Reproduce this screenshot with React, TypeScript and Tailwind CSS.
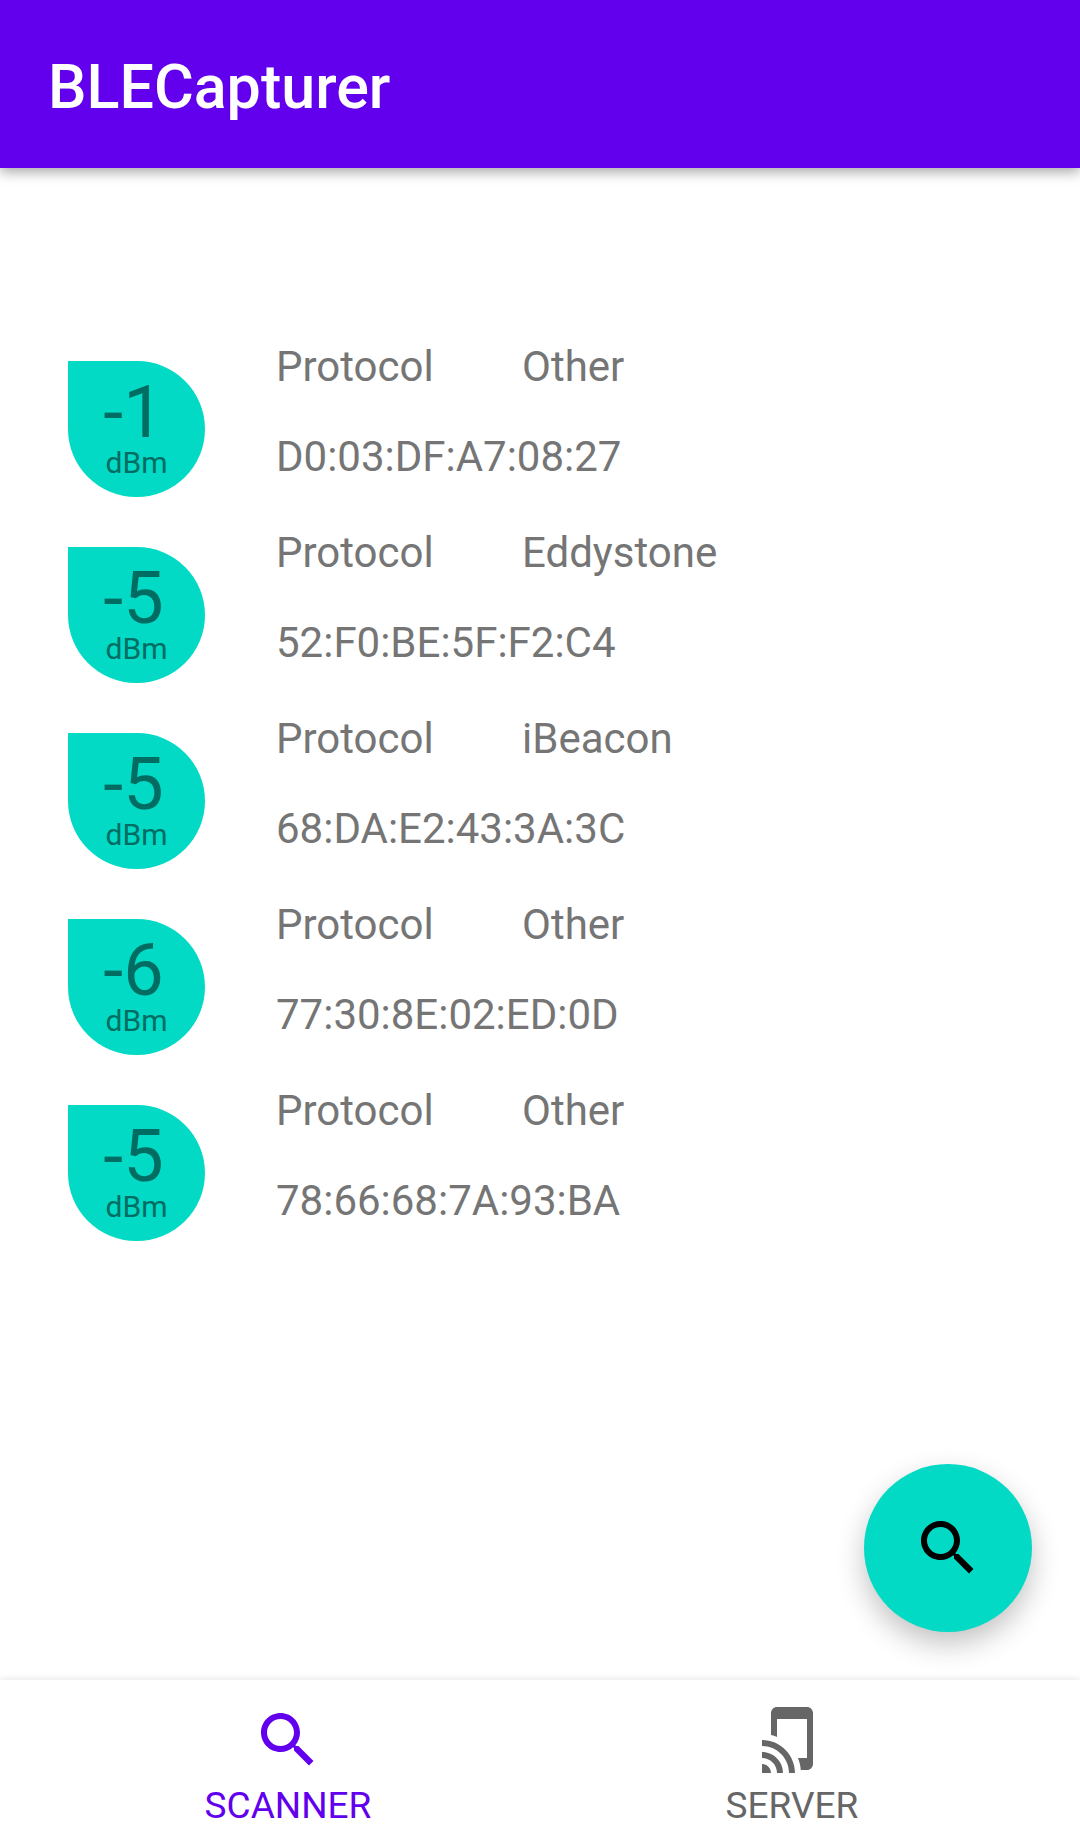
import { useState } from "react";

type Device = { rssi: number; protocol: string; address: string };

const devices: Device[] = [
  { rssi: -1, protocol: "Other", address: "D0:03:DF:A7:08:27" },
  { rssi: -5, protocol: "Eddystone", address: "52:F0:BE:5F:F2:C4" },
  { rssi: -5, protocol: "iBeacon", address: "68:DA:E2:43:3A:3C" },
  { rssi: -6, protocol: "Other", address: "77:30:8E:02:ED:0D" },
  { rssi: -5, protocol: "Other", address: "78:66:68:7A:93:BA" },
];

const searchPath =
  "M15.5 14h-.79l-.28-.27C15.41 12.59 16 11.11 16 9.5 16 5.91 13.09 3 9.5 3S3 5.91 3 9.5 5.91 16 9.5 16c1.61 0 3.09-.59 4.23-1.57l.27.28v.79l5 4.99L20.49 19l-4.99-5zm-6 0C7.01 14 5 11.99 5 9.5S7.01 5 9.5 5 14 7.01 14 9.5 11.99 14 9.5 14z";
const castPath =
  "M2 16v2c2.76 0 5 2.24 5 5h2c0-3.87-3.13-7-7-7zm0 4v3h3c0-1.66-1.34-3-3-3zm0-8v2c4.97 0 9 4.03 9 9h2c0-6.08-4.92-11-11-11zM17 1.01L7 1c-1.1 0-2 .9-2 2v7.37c.69.16 1.36.37 2 .64V5h10v13h-3.03c.52 1.25.84 2.59.95 4H17c1.1 0 2-.9 2-2V3c0-1.1-.9-1.99-2-1.99z";

function Icon({ path }: { path: string }) {
  return (
    <svg viewBox="0 0 24 24" className="size-18 fill-current" aria-hidden="true">
      <path d={path} />
    </svg>
  );
}

function DeviceRow({ device }: { device: Device }) {
  return (
    <li className="flex items-start gap-[71px]">
      <div className="mt-[19px] flex h-[136px] w-[137px] shrink-0 flex-col items-center rounded-full rounded-tl-none bg-[#03dac5] pt-4 text-[#016d62]">
        <span className="pr-1.5 text-[72px] leading-[72px]">{device.rssi}</span>
        <span className="text-[30px] leading-7">dBm</span>
      </div>
      <div className="flex flex-col gap-10 text-[42px] leading-[50px] text-[#757575]">
        <div className="flex">
          <span className="w-[246px]">Protocol</span>
          <span>{device.protocol}</span>
        </div>
        <span>{device.address}</span>
      </div>
    </li>
  );
}

const tabs = [
  { id: "scanner", label: "SCANNER", path: searchPath },
  { id: "server", label: "SERVER", path: castPath },
];

export default function App() {
  const [active, setActive] = useState("scanner");
  return (
    <div className="flex min-h-screen flex-col bg-white font-['Roboto',sans-serif]">
      <header className="z-10 flex h-42 items-center bg-[#6200ee] px-12 pt-1.5 shadow-[0_4px_12px_rgba(0,0,0,0.35)]">
        <h1 className="text-[61px] leading-[70px] font-medium text-white">BLECapturer</h1>
      </header>
      <main className="relative grow px-[68px] pt-[174px] pb-12">
        <ul className="flex flex-col gap-[31px]">
          {devices.map((d) => (
            <DeviceRow key={d.address} device={d} />
          ))}
        </ul>
        <button
          type="button"
          aria-label="Scan"
          className="absolute right-12 bottom-12 flex size-42 items-center justify-center rounded-full bg-[#03dac5] text-black shadow-[0_12px_28px_rgba(0,0,0,0.24)]"
        >
          <Icon path={searchPath} />
        </button>
      </main>
      <nav className="z-10 flex h-42 justify-center bg-white px-9 shadow-[0_0_8px_rgba(0,0,0,0.12)]">
        {tabs.map((t) => (
          <button
            key={t.id}
            type="button"
            onClick={() => setActive(t.id)}
            aria-current={active === t.id ? "page" : undefined}
            className={
              active === t.id
                ? "flex flex-1 flex-col items-center pt-6 text-[#6200ee]"
                : "flex flex-1 flex-col items-center pt-6 text-[#666666]"
            }
          >
            <Icon path={t.path} />
            <span className="mt-2 text-[37px] leading-[44px]">{t.label}</span>
          </button>
        ))}
      </nav>
    </div>
  );
}
